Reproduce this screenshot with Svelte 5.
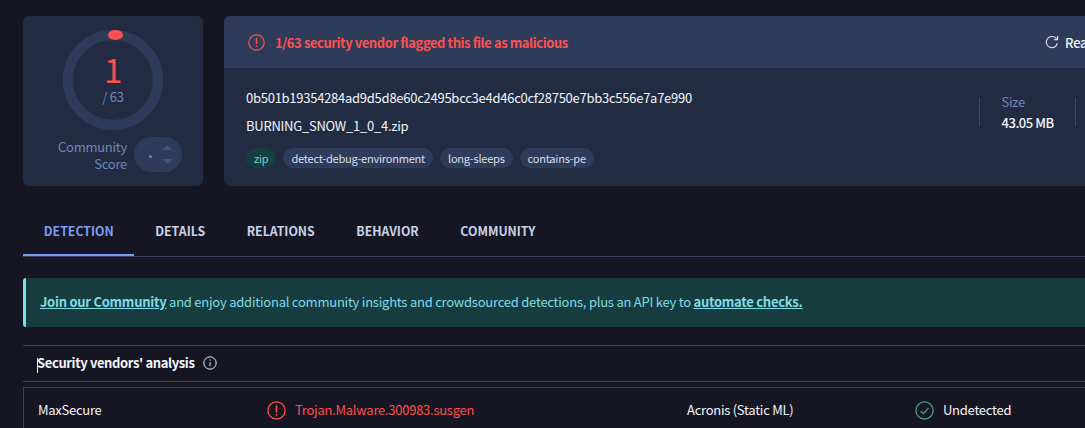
<script>
  const tags = ['detect-debug-environment', 'long-sleeps', 'contains-pe'];
  const tabs = ['DETECTION', 'DETAILS', 'RELATIONS', 'BEHAVIOR', 'COMMUNITY'];
</script>

<div class="page">
  <section class="top">
    <div class="score card">
      <div class="ring">
        <svg width="100" height="100" viewBox="0 0 100 100">
          <circle cx="50" cy="50" r="45" fill="none" stroke="#2e3c5a" stroke-width="10" />
          <ellipse cx="52.5" cy="5" rx="7.5" ry="5" fill="#ff5050" />
        </svg>
        <div class="num">1</div>
        <div class="den">/ 63</div>
      </div>
      <div class="community">
        <div class="clabel">Community<br />Score</div>
        <div class="pill">
          <span class="dot"></span>
          <span class="arrows">
            <svg width="11" height="5" viewBox="0 0 11 5"><path d="M5.5 0 L11 5 H0 Z" fill="#42547a" /></svg>
            <svg width="11" height="5" viewBox="0 0 11 5"><path d="M0 0 H11 L5.5 5 Z" fill="#42547a" /></svg>
          </span>
        </div>
      </div>
    </div>

    <div class="main card">
      <div class="alert">
        <svg class="ic" width="17" height="17" viewBox="0 0 17 17" fill="none" stroke="#ff5050" stroke-width="1.2">
          <circle cx="8.5" cy="8.5" r="7.7" /><path d="M8.5 4.4v5.2" stroke-width="1.5" stroke-linecap="round" /><circle cx="8.5" cy="12.3" r="0.75" fill="#ff5050" stroke="none" />
        </svg>
        <span class="atext">1/63 security vendor flagged this file as malicious</span>
        <span class="re">
          <svg width="14" height="14" viewBox="0 0 14 14" fill="none" stroke="#e6ebf5" stroke-width="1.1"><path d="M12.4 8.2A5.6 5.6 0 1 1 10.6 2.9L12.2 4.6" /><path d="M12.6 1v3.8H8.8" /></svg>
          Reanalyze
        </span>
      </div>
      <div class="body">
        <div class="info">
          <div class="hash">0b501b19354284ad9d5d8e60c2495bcc3e4d46c0cf28750e7bb3c556e7a7e990</div>
          <div class="fname">BURNING_SNOW_1_0_4.zip</div>
          <div class="tags">
            <span class="tag zip">zip</span>
            {#each tags as t}<span class="tag">{t}</span>{/each}
          </div>
        </div>
        <div class="size">
          <div class="slabel">Size</div>
          <div class="sval">43.05 MB</div>
        </div>
      </div>
    </div>
  </section>

  <nav class="tabs">
    {#each tabs as t, i}<span class="tab" class:active={i === 0}>{t}</span>{/each}
  </nav>

  <div class="banner">
    <a href="#join">Join our Community</a> and enjoy additional community insights and crowdsourced detections, plus an API key to <a href="#api">automate checks.</a>
  </div>

  <div class="head">
    <span class="caret"></span><span class="htitle">Security vendors' analysis</span>
    <svg width="14" height="14" viewBox="0 0 14 14" fill="none" stroke="#e6ebf5" stroke-width="1"><circle cx="7" cy="7" r="6.2" /><path d="M7 6.2v4" /><circle cx="7" cy="4.1" r="0.7" fill="#e6ebf5" stroke="none" /></svg>
  </div>

  <div class="table">
    <div class="row">
      <span class="vendor v1">MaxSecure</span>
      <span class="result r1">
        <svg width="19" height="19" viewBox="0 0 19 19" fill="none" stroke="#ff4d4d" stroke-width="1.3"><circle cx="9.5" cy="9.5" r="8.6" /><path d="M9.5 5v5.8" stroke-width="1.7" stroke-linecap="round" /><circle cx="9.5" cy="13.8" r="0.9" fill="#ff4d4d" stroke="none" /></svg>
        <span class="bad">Trojan.Malware.300983.susgen</span>
      </span>
      <span class="vendor v2">Acronis (Static ML)</span>
      <span class="result">
        <svg width="19" height="19" viewBox="0 0 19 19" fill="none" stroke="#4a9c8f" stroke-width="1.3"><circle cx="9.5" cy="9.5" r="8.6" /><path d="M5.6 10 8.4 12.6 13.6 7" /></svg>
        <span class="good">Undetected</span>
      </span>
    </div>
  </div>
</div>

<style>
  :global(body) { margin: 0; background: #161622; }
  .page {
    width: 1085px; height: 428px; overflow: hidden; box-sizing: border-box;
    padding: 16px 0 0 23px; background: #161622; color: #f2f5fb;
    font-family: "Noto Sans CJK JP", "Noto Sans", sans-serif; font-size: 13px; letter-spacing: -0.02em;
  }
  .top { display: flex; gap: 21px; width: 1200px; height: 170px; }
  .card { background: #232b42; border-radius: 6px; }
  .score { width: 180px; flex: none; box-sizing: border-box; padding-top: 14px; display: flex; flex-direction: column; align-items: center; }
  .ring { position: relative; width: 100px; height: 100px; }
  .ring svg { display: block; }
  .num { position: absolute; left: 0; right: 0; top: 24px; text-align: center; color: #ff5050; font-size: 33px; line-height: 30px; }
  .den { position: absolute; left: 0; right: 0; top: 58px; text-align: center; color: #6f88b8; font-size: 13px; line-height: 18px; }
  .community { display: flex; gap: 7px; align-items: center; margin-top: 7px; align-self: flex-end; padding-right: 21px; }
  .clabel { text-align: right; color: #6f88b8; font-size: 13px; line-height: 17px; }
  .pill { width: 48px; height: 35px; border-radius: 18px; background: #2e3c5a; display: flex; align-items: center; justify-content: flex-end; gap: 10px; padding-right: 9px; box-sizing: border-box; }
  .dot { width: 3px; height: 3px; border-radius: 50%; background: #6f88b8; margin-top: 3px; }
  .arrows { display: flex; flex-direction: column; gap: 9px; }
  .arrows svg { display: block; }
  .main { flex: 1; overflow: hidden; }
  .alert { height: 52px; background: #2e3c5a; display: flex; align-items: center; padding-left: 24px; position: relative; }
  .ic { margin-right: 10px; }
  .atext { color: #ff5050; font-weight: 700; letter-spacing: -0.42px; }
  .re { position: absolute; left: 821px; top: 0; height: 52px; display: flex; align-items: center; gap: 6px; font-weight: 500; }
  .body { display: flex; padding: 19px 0 0 22px; }
  .info { width: 733px; }
  .hash { line-height: 20px; margin-top: 1px; }
  .fname { line-height: 20px; margin-top: 8px; }
  .tags { display: flex; gap: 7px; margin-top: 12px; }
  .tag { height: 20px; line-height: 20px; padding: 0 8px; border-radius: 10px; background: #2e3c5a; font-size: 11.1px; color: #d5deee; }
  .tag.zip { background: #173f41; color: #6fd0dc; }
  .size { border-left: 1px solid #3b4a69; border-right: 1px solid #3b4a69; height: 28px; width: 97px; padding-left: 21.5px; box-sizing: border-box; margin-top: 11px; }
  .slabel { color: #6f88b8; line-height: 20px; margin-top: -6px; }
  .sval { font-weight: 500; line-height: 20px; margin-top: 1px; letter-spacing: -0.45px; }
  .tabs { display: flex; height: 51px; margin-top: 19px; border-bottom: 1px solid #3a4264; margin-right: -23px; }
  .tab { padding: 0 20.8px; font-size: 12.3px; font-weight: 700; color: #c8d3ea; height: 51px; line-height: 52px; box-sizing: border-box; letter-spacing: 0; }
  .tab.active { color: #7b9ff5; border-bottom: 2px solid #7b9ff5; }
  .banner { margin-top: 21px; height: 49px; box-sizing: border-box; border-left: 3px solid #7fdde6; border-radius: 3px 0 0 3px; background: #163c40; color: #7fdde6; padding-left: 14px; line-height: 48px; margin-right: -23px; letter-spacing: -0.23px; }
  .banner a { color: #7fdde6; font-weight: 700; letter-spacing: -0.26px; }
  .head { margin-top: 18px; height: 35px; box-sizing: content-box; border-top: 1px solid #3a4264; border-bottom: 1px solid #3a4264; display: flex; align-items: center; padding-left: 14px; position: relative; font-weight: 700; gap: 9px; margin-right: -23px; letter-spacing: -0.38px; }
  .head > * { margin-bottom: 2px; }
  .caret { position: absolute; left: 14px; top: 12px; width: 1px; height: 15px; background: #f2f5fb; }
  .table { margin-top: 5px; height: 60px; border-top: 1px solid #3a4264; border-left: 1px solid #3a4264; margin-right: -23px; }
  .row { display: flex; align-items: center; height: 44px; }
  .v1 { width: 243px; padding-left: 14px; box-sizing: border-box; }
  .vendor, .bad, .good { margin-bottom: 1px; }
  .result { display: flex; align-items: center; gap: 9px; }
  .r1 { width: 420px; }
  .v2 { width: 228px; }
  .bad { color: #ff4d4d; }
</style>
